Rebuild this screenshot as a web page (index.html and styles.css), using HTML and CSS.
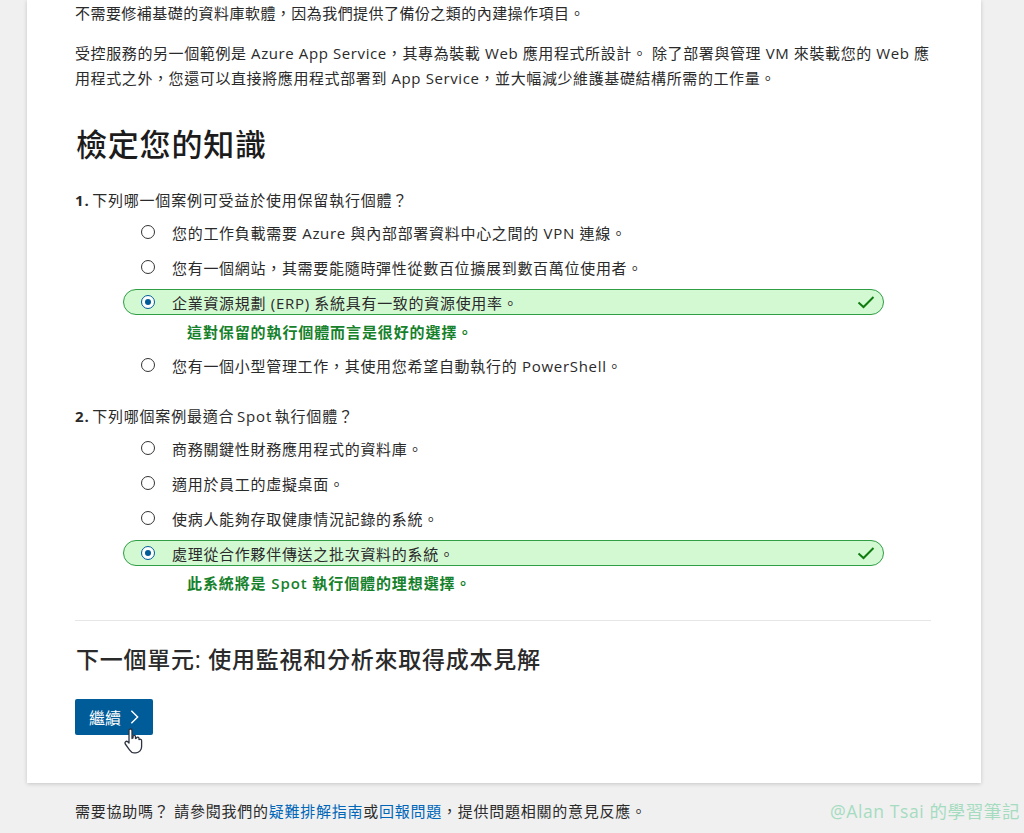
FILE: index.html
```html
<!DOCTYPE html>
<html lang="zh-Hant">
<head>
<meta charset="utf-8">
<title>檢定您的知識</title>
<link rel="stylesheet" href="styles.css">
</head>
<body>
<main class="card">
  <p class="para first">不需要修補基礎的資料庫軟體，因為我們提供了備份之類的內建操作項目。</p>
  <p class="para second">受控服務的另一個範例是 Azure App Service，其專為裝載 Web 應用程式所設計。 除了部署與管理 VM 來裝載您的 Web 應用程式之外，您還可以直接將應用程式部署到 App Service，並大幅減少維護基礎結構所需的工作量。</p>
  <h2 class="title">檢定您的知識</h2>

  <section class="quiz">
    <div class="question"><b>1.</b> 下列哪一個案例可受益於使用保留執行個體？</div>
    <div class="choice"><span class="radio"></span><span>您的工作負載需要 Azure 與內部部署資料中心之間的 VPN 連線。</span></div>
    <div class="choice"><span class="radio"></span><span>您有一個網站，其需要能隨時彈性從數百位擴展到數百萬位使用者。</span></div>
    <div class="choice correct"><span class="radio on"></span><span class="grow">企業資源規劃 (ERP) 系統具有一致的資源使用率。</span>
      <svg class="check" width="18" height="14" viewBox="0 0 18 14"><path d="M1.500 7.500 6.500 12 16.500 2" fill="none" stroke="#107c10" stroke-width="2"/></svg></div>
    <div class="explain">這對保留的執行個體而言是很好的選擇。</div>
    <div class="choice"><span class="radio"></span><span>您有一個小型管理工作，其使用您希望自動執行的 PowerShell。</span></div>
  </section>

  <section class="quiz q2">
    <div class="question"><b>2.</b> 下列哪個案例最適合 Spot 執行個體？</div>
    <div class="choice"><span class="radio"></span><span>商務關鍵性財務應用程式的資料庫。</span></div>
    <div class="choice"><span class="radio"></span><span>適用於員工的虛擬桌面。</span></div>
    <div class="choice"><span class="radio"></span><span>使病人能夠存取健康情況記錄的系統。</span></div>
    <div class="choice correct"><span class="radio on"></span><span class="grow">處理從合作夥伴傳送之批次資料的系統。</span>
      <svg class="check" width="18" height="14" viewBox="0 0 18 14"><path d="M1.500 7.500 6.500 12 16.500 2" fill="none" stroke="#107c10" stroke-width="2"/></svg></div>
    <div class="explain">此系統將是 Spot 執行個體的理想選擇。</div>
  </section>

  <hr class="rule">
  <h3 class="next">下一個單元: 使用監視和分析來取得成本見解</h3>
  <div class="btn-wrap">
    <a class="btn"><span class="btn-label">繼續</span>
      <svg width="10" height="16" viewBox="0 0 10 16"><path d="M1.500 1 8.500 8l-7 7" fill="none" stroke="#fff" stroke-width="1.600"/></svg>
    </a>
    <svg class="cursor" width="20" height="26" viewBox="0 0 20 26"><path d="M5 2.500c0-2 3-2 3 0v8l1-.5V8.500c0-1.500 2.500-1.500 2.500 0V10.500l1-.3c.2-1.500 2.500-1.300 2.500.300v1l.8-.2c1-.2 1.800.5 1.800 1.500v6c0 3-2.300 6-5.600 6H10c-2.500 0-3.500-1.500-4.500-3L1.300 16c-1-2 1-3.500 2.500-2.200L5 15Z" fill="#fff" stroke="#2d3340" stroke-width="1.300" stroke-linejoin="round"/></svg>
  </div>
</main>
<footer class="foot">
  <span>需要協助嗎？ 請參閱我們的<a>疑難排解指南</a>或<a>回報問題</a>，提供問題相關的意見反應。</span>
  <span class="mark">@Alan Tsai 的學習筆記</span>
</footer>
</body>
</html>
```
FILE: styles.css
```css
html, body { margin: 0; padding: 0; }
body {
  width: 1024px; height: 833px; overflow: hidden; background: #f0f0f0;
  font-family: "Open Sans", "Noto Sans CJK TC", sans-serif;
  font-size: 15px; color: #2a2a2a;
}
.card {
  box-sizing: border-box; width: 954px; height: 783px; margin-left: 27px;
  padding: 0 50px 0 48px; background: #fff; box-shadow: 0 1px 4px rgba(0,0,0,.18);
  display: flow-root;
}
.para { margin: 0; line-height: 25px; letter-spacing: .45px; }
.first { margin-top: 1px; }
.second { margin-top: 15px; letter-spacing: .6px; }
.title { margin: 33px 0 0 1px; font-size: 31px; line-height: 40px; font-weight: 500; color: #1c1c1c; letter-spacing: .8px; }
.quiz { margin-top: 26px; letter-spacing: .7px; }
.q2 { margin-top: 28px; }
.question { line-height: 20px; word-spacing: -2px; letter-spacing: .8px; }
.choice {
  display: flex; align-items: center; gap: 17px; height: 26px; margin-top: 9px;
  margin-left: 48px; padding: 0 8px 0 18px; width: 761px; box-sizing: border-box;
}
.radio { width: 14px; height: 14px; box-sizing: border-box; border: 1px solid #333; border-radius: 50%; background: #fff; flex: none; display: flex; align-items: center; justify-content: center; }
.radio.on { border-color: #005b99; }
.radio.on::after { content: ""; width: 6px; height: 6px; border-radius: 50%; background: #005b99; }
.correct { background: #d3f9d3; border: 1px solid #2f9e44; border-radius: 13px; padding-left: 17px; }
.grow { flex: 1; }
.check { flex: none; }
.explain { margin: 5px 0 -1px 112px; line-height: 24px; font-weight: 600; color: #16812b; letter-spacing: .9px; }
.rule { margin: 26px 0 0; border: 0; border-top: 1px solid #e6e6e6; }
.next { margin: 20px 0 0 1px; font-size: 23px; line-height: 36px; font-weight: 500; color: #2a2a2a; letter-spacing: .75px; }
.btn-wrap { position: relative; margin-top: 22px; }
.btn {
  display: inline-flex; align-items: center; gap: 9px; height: 36px; width: 78px;
  box-sizing: border-box; padding: 0 14px; background: #005b99; color: #fff; border-radius: 2px;
  font-size: 16px;
}
.btn-label { white-space: nowrap; }
.cursor { position: absolute; left: 49px; top: 29px; }
.foot { display: flex; justify-content: space-between; align-items: center; padding: 15px 4px 0 75px; letter-spacing: .75px; }
.foot a { color: #0067b8; }
.mark { color: #a5dcc0; font-size: 17.500px; letter-spacing: .6px; }
```
